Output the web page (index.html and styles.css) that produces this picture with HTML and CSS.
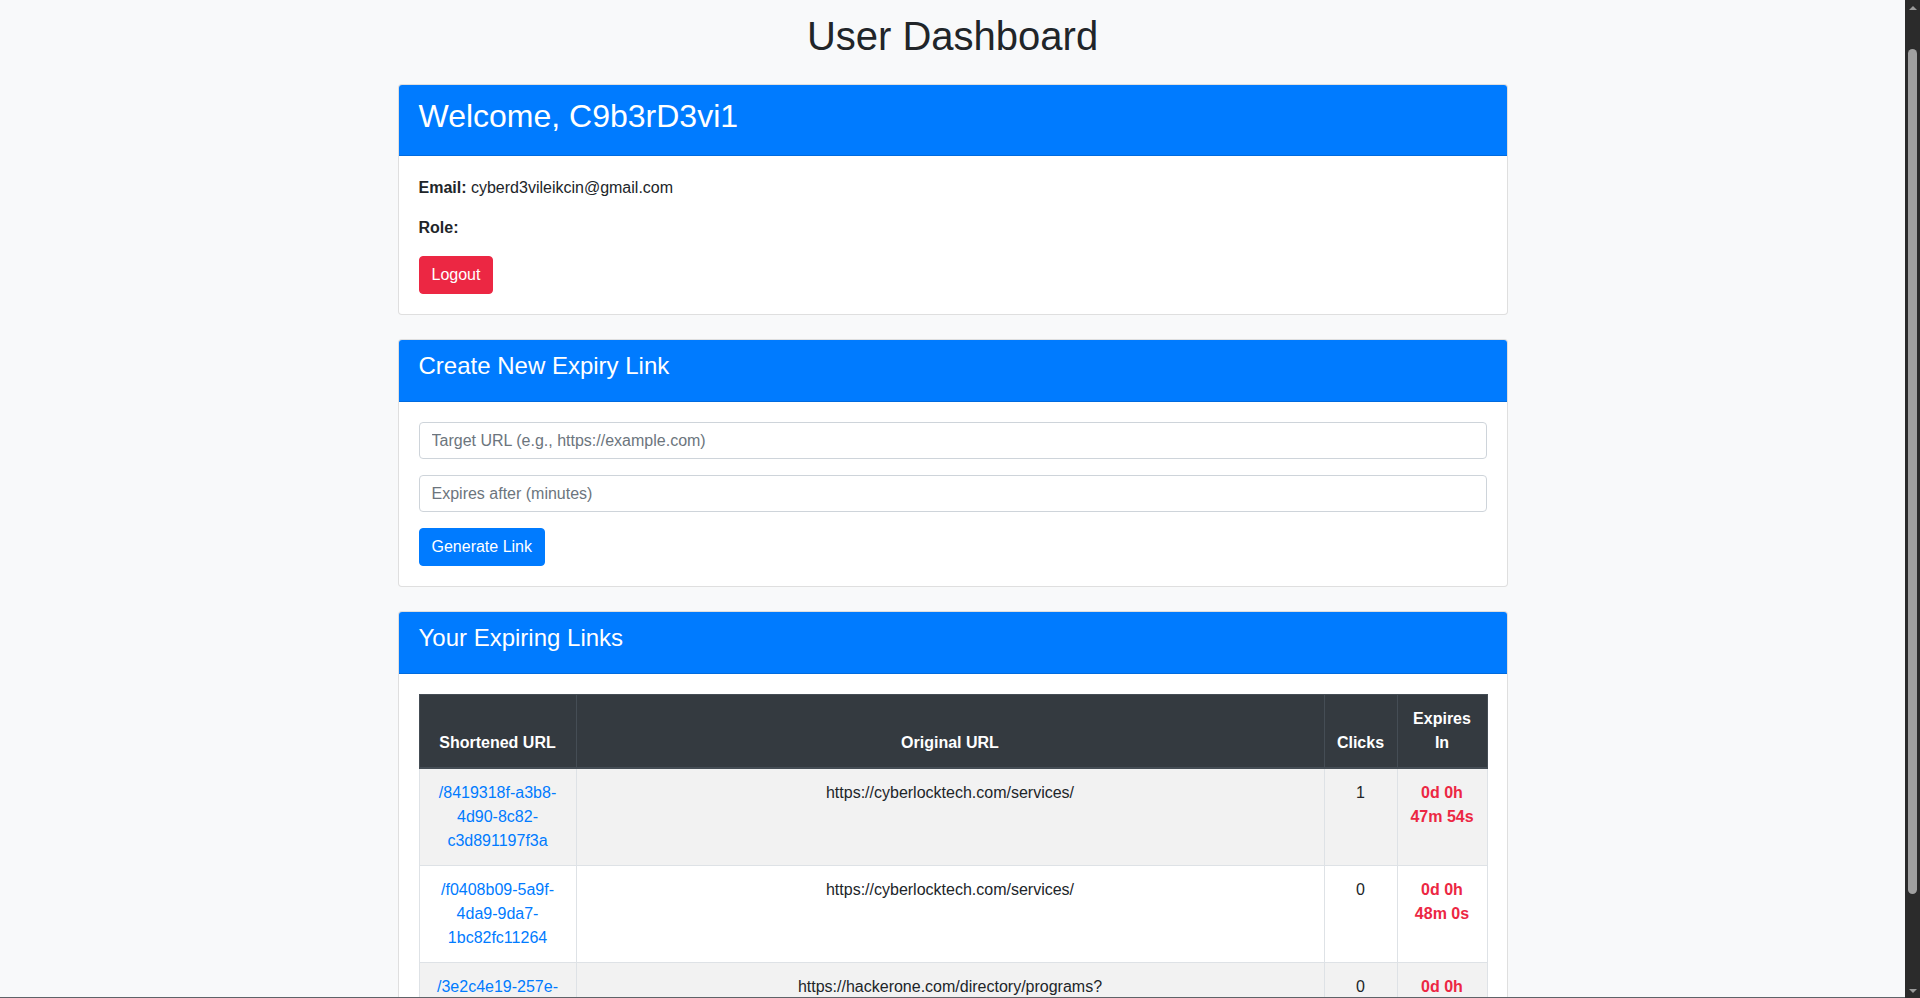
FILE: index.html
```html
<!DOCTYPE html>
<html lang="en">
<head>
<meta charset="utf-8">
<title>User Dashboard</title>
<link rel="stylesheet" href="styles.css">
</head>
<body>
<div class="container">
  <h1 class="page-title">User Dashboard</h1>

  <div class="card">
    <div class="card-header">
      <h2 class="title-lg">Welcome, C9b3rD3vi1</h2>
    </div>
    <div class="card-body">
      <p class="info"><strong>Email:</strong> cyberd3vileikcin@gmail.com</p>
      <p class="info"><strong>Role:</strong> </p>
      <button class="btn btn-danger" type="button">Logout</button>
    </div>
  </div>

  <div class="card">
    <div class="card-header">
      <h4 class="title-md">Create New Expiry Link</h4>
    </div>
    <div class="card-body">
      <input class="form-control" type="text" placeholder="Target URL (e.g., https://example.com)">
      <input class="form-control" type="number" placeholder="Expires after (minutes)">
      <button class="btn btn-primary" type="button">Generate Link</button>
    </div>
  </div>

  <div class="card">
    <div class="card-header">
      <h4 class="title-md">Your Expiring Links</h4>
    </div>
    <div class="card-body">
      <table class="links-table">
        <colgroup>
          <col class="c-short">
          <col class="c-orig">
          <col class="c-clicks">
          <col class="c-exp">
        </colgroup>
        <thead>
          <tr>
            <th>Shortened URL</th>
            <th>Original URL</th>
            <th>Clicks</th>
            <th>Expires In</th>
          </tr>
        </thead>
        <tbody>
          <tr>
            <td><a href="#">/8419318f-a3b8-4d90-8c82-c3d891197f3a</a></td>
            <td>https://cyberlocktech.com/services/</td>
            <td>1</td>
            <td class="expires">0d 0h 47m 54s</td>
          </tr>
          <tr>
            <td><a href="#">/f0408b09-5a9f-4da9-9da7-1bc82fc11264</a></td>
            <td>https://cyberlocktech.com/services/</td>
            <td>0</td>
            <td class="expires">0d 0h 48m 0s</td>
          </tr>
          <tr>
            <td><a href="#">/3e2c4e19-257e-4b1a-9f3c-7d2e6a1c0b58</a></td>
            <td class="wrap">https://hackerone.com/directory/programs? order_direction=DESC&amp;order_field=launched_at&amp;asset_type=URL&amp;offers_bounties=true&amp;page=1</td>
            <td>0</td>
            <td class="expires">0d 0h 52m 10s</td>
          </tr>
        </tbody>
      </table>
    </div>
  </div>
</div>

<div class="fake-scrollbar" aria-hidden="true">
  <span class="sb-arrow sb-up"></span>
  <span class="sb-track"><span class="sb-thumb"></span></span>
  <span class="sb-arrow sb-down"></span>
</div>
<div class="window-edge" aria-hidden="true"></div>
</body>
</html>
```

FILE: styles.css
```css
html {
  background: #f8f9fa;
}

body {
  margin: 0;
  padding-right: 15px;
  background: #f8f9fa;
  color: #212529;
  font-family: "Liberation Sans", Arial, sans-serif;
  font-size: 16px;
  line-height: 1.5;
}

.container {
  max-width: 1110px;
  margin: 0 auto;
  padding: 0 15px 24px;
}

.page-title {
  margin: 12px 0 24px;
  font-size: 40px;
  font-weight: 400;
  line-height: 1.2;
  text-align: center;
  color: #212529;
}

.card {
  display: flex;
  flex-direction: column;
  background: #fff;
  border: 1px solid rgba(0, 0, 0, 0.125);
  border-radius: 4px;
  margin-bottom: 24px;
  overflow: hidden;
}

.card-header {
  background: #007bff;
  color: #fff;
  padding: 12px 20px;
  border-bottom: 1px solid rgba(0, 0, 0, 0.125);
}

.title-lg {
  margin: 0 0 8px;
  font-size: 32px;
  font-weight: 400;
  line-height: 1.2;
}

.title-md {
  margin: 0 0 8px;
  font-size: 24px;
  font-weight: 400;
  line-height: 1.2;
}

.card-body {
  display: flex;
  flex-direction: column;
  align-items: flex-start;
  padding: 20px;
}

.info {
  margin: 0 0 16px;
}

.info strong {
  font-weight: 700;
}

.btn {
  font-family: inherit;
  font-size: 16px;
  line-height: 1.5;
  padding: 6px 12px;
  border: 1px solid transparent;
  border-radius: 4px;
  color: #fff;
  cursor: pointer;
}

.btn-danger {
  background: #ec2743;
  border-color: #ec2743;
}

.btn-primary {
  background: #007bff;
  border-color: #007bff;
}

.form-control {
  box-sizing: border-box;
  width: 100%;
  height: 37px;
  margin: 0 0 16px;
  padding: 6px 12px;
  font-family: inherit;
  font-size: 16px;
  line-height: 1.5;
  color: #495057;
  background: #fff;
  border: 1px solid #ced4da;
  border-radius: 4px;
  -moz-appearance: textfield;
}

.form-control::-webkit-outer-spin-button,
.form-control::-webkit-inner-spin-button {
  -webkit-appearance: none;
  margin: 0;
}

.form-control::placeholder {
  color: #6c757d;
  opacity: 1;
}

.links-table {
  width: 100%;
  table-layout: fixed;
  border-collapse: collapse;
  color: #212529;
  text-align: center;
}

.c-short { width: 157px; }
.c-orig { width: 748px; }
.c-clicks { width: 73px; }
.c-exp { width: 90px; }

.links-table th,
.links-table td {
  padding: 12px;
  border: 1px solid #dee2e6;
}

.links-table thead th {
  background: #343a40;
  color: #fff;
  border-color: #454d55;
  border-bottom-width: 2px;
  vertical-align: bottom;
  font-weight: 700;
}

.links-table td {
  vertical-align: top;
}

.links-table tbody tr:nth-child(odd) {
  background: rgba(0, 0, 0, 0.05);
}

.links-table a {
  color: #007bff;
  text-decoration: none;
}

.links-table .expires {
  color: #ec2743;
  font-weight: 700;
}

.links-table .wrap {
  overflow-wrap: break-word;
}

/* Browser scrollbar drawn over the page's right edge */
.fake-scrollbar {
  position: fixed;
  top: 0;
  right: 0;
  width: 15px;
  height: 100vh;
  background: #2b2b2b;
  display: flex;
  flex-direction: column;
  align-items: center;
}

.sb-arrow {
  flex: 0 0 15px;
  width: 15px;
  display: flex;
  align-items: center;
  justify-content: center;
}

.sb-arrow::before {
  content: "";
  width: 0;
  height: 0;
  border-left: 4px solid transparent;
  border-right: 4px solid transparent;
}

.sb-up::before {
  border-bottom: 4px solid #9a9a9a;
}

.sb-down::before {
  border-top: 4px solid #9a9a9a;
}

.sb-track {
  flex: 1;
  width: 15px;
  display: flex;
  justify-content: center;
  padding-top: 34px;
  box-sizing: border-box;
}

.sb-thumb {
  width: 9px;
  height: 845px;
  border-radius: 5px;
  background: #a0a0a0;
}

.window-edge {
  position: fixed;
  left: 0;
  right: 15px;
  bottom: 0;
  height: 1px;
  background: #5f6368;
}
```
